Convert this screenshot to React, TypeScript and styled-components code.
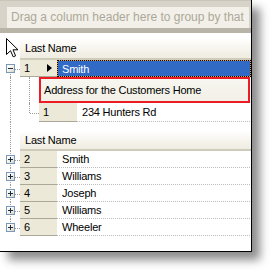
import React from 'react'
import styled, { createGlobalStyle } from 'styled-components'

const GlobalStyle = createGlobalStyle`
    html, body {
        margin: 0;
        padding: 0;
        background: #ffffff;
    }
    body {
        font-family: "Liberation Sans", Arial, sans-serif;
        width: 272px;
        height: 272px;
        overflow: hidden;
    }
`;

const rows = ['Smith', 'Williams', 'Joseph', 'Williams', 'Wheeler']

type LineKind = 'none' | 'full' | 'down' | 'up'

const App = () => {
    return (
        <>
            <GlobalStyle />
            <Frame>
                <GroupArea>
                    <GroupBox>Drag a column header here to group by that</GroupBox>
                </GroupArea>

                <Spacer $h={5} />

                <Line>
                    <Gutter $line='none' />
                    <HeaderCell $h={22}>Last Name</HeaderCell>
                </Line>

                <Line $h={17}>
                    <Gutter $line='down' $branch>
                        <Expander $open />
                    </Gutter>
                    <Selector $w={37}>
                        1
                        <RowArrow />
                    </Selector>
                    <DataCell $selected>Smith</DataCell>
                </Line>

                <Line $h={26}>
                    <Gutter $line='full' />
                    <Gutter $line='full' $w={19} $x={9} />
                    <BandHeader>Address for the Customers Home</BandHeader>
                </Line>

                <Line $h={19}>
                    <Gutter $line='full' />
                    <Gutter $line='up' $w={19} $x={9} $branch />
                    <Selector $w={38}>1</Selector>
                    <DataCell>234 Hunters Rd</DataCell>
                </Line>

                <Line $h={9}>
                    <Gutter $line='full' />
                </Line>

                <Line>
                    <Gutter $line='full' />
                    <HeaderCell $h={20}>Last Name</HeaderCell>
                </Line>

                {rows.map((name, i) => (
                    <Line $h={17} key={i}>
                        <Gutter $line={i === rows.length - 1 ? 'up' : 'full'} $branch>
                            <Expander />
                        </Gutter>
                        <Selector $w={37}>{i + 2}</Selector>
                        <DataCell>{name}</DataCell>
                    </Line>
                ))}

                <Cursor width='13' height='20' viewBox='0 0 13 20'>
                    <path
                        d='M0.5 0.5 L0.5 16.5 L4.5 12.7 L7.2 18.8 L9.6 17.8 L7 11.8 L12 11.8 Z'
                        fill='#ffffff'
                        stroke='#000000'
                        strokeWidth='1'
                        strokeLinejoin='miter'
                    />
                </Cursor>
            </Frame>
        </>
    )
}

const Frame = styled.div`
    position: relative;
    width: 251px;
    height: 251px;
    background: #ffffff;
    border-right: 1px solid #000000;
    border-bottom: 1px solid #000000;
    box-shadow: 8px 8px 9px rgba(0, 0, 0, 0.45);
    overflow: hidden;
    display: flex;
    flex-direction: column;
    font-size: 11px;
    letter-spacing: -0.2px;
    color: #000000;
`;

const GroupArea = styled.div`
    box-sizing: border-box;
    height: 33px;
    flex: none;
    padding: 6px 2px 0 7px;
    background: #d7d3c9;
    border-top: 1px solid #c9c5b9;
    border-bottom: 5px solid #b8b4a7;
`;

const GroupBox = styled.div`
    height: 21px;
    background: #f2f0e8;
    color: #aca899;
    font-size: 12px;
    letter-spacing: 0;
    line-height: 21px;
    padding-left: 4px;
    white-space: nowrap;
    overflow: hidden;
`;

const Spacer = styled.div<{ $h: number }>`
    height: ${p => p.$h}px;
    flex: none;
`;

const Line = styled.div<{ $h?: number }>`
    display: flex;
    flex: none;
    ${p => p.$h ? `height: ${p.$h}px;` : ''}
`;

const Gutter = styled.div<{ $line: LineKind; $w?: number; $x?: number; $branch?: boolean }>`
    position: relative;
    flex: none;
    width: ${p => p.$w ?? 20}px;
    box-sizing: border-box;
    display: flex;
    align-items: center;
    padding-left: 6px;

    &::before {
        content: '';
        display: ${p => p.$line === 'none' ? 'none' : 'block'};
        position: absolute;
        left: ${p => p.$x ?? 10}px;
        top: ${p => p.$line === 'down' ? '50%' : '0'};
        bottom: ${p => p.$line === 'up' ? '50%' : '0'};
        border-left: 1px dotted #9a9a9a;
    }

    &::after {
        content: '';
        display: ${p => p.$branch ? 'block' : 'none'};
        position: absolute;
        left: ${p => (p.$x ?? 10) + 1}px;
        right: 0;
        top: 50%;
        border-top: 1px dotted #9a9a9a;
    }
`;

const Expander = styled.div<{ $open?: boolean }>`
    position: relative;
    z-index: 1;
    box-sizing: border-box;
    width: 9px;
    height: 9px;
    border: 1px solid #7a99b8;
    background: linear-gradient(135deg, #ffffff 0%, #f0efe6 60%, #d6d3c4 100%);

    &::before {
        content: '';
        position: absolute;
        left: 1px;
        top: 3px;
        width: 5px;
        height: 1px;
        background: #1e2a3a;
    }

    &::after {
        content: '';
        display: ${p => p.$open ? 'none' : 'block'};
        position: absolute;
        left: 3px;
        top: 1px;
        width: 1px;
        height: 5px;
        background: #1e2a3a;
    }
`;

const HeaderCell = styled.div<{ $h: number }>`
    flex: 1;
    box-sizing: border-box;
    height: ${p => p.$h}px;
    padding-left: 5px;
    display: flex;
    align-items: center;
    background: linear-gradient(to bottom, #ffffff 0%, #f6f4ec 55%, #efece1 100%);
    border-bottom: 2px solid #cfcbbb;
    white-space: nowrap;
`;

const Selector = styled.div<{ $w: number }>`
    position: relative;
    flex: none;
    box-sizing: border-box;
    width: ${p => p.$w}px;
    background: #ece9d8;
    border-bottom: 1px solid #aca899;
    padding-left: 4px;
    display: flex;
    align-items: center;
`;

const RowArrow = styled.span`
    position: absolute;
    left: 27px;
    top: 4px;
    width: 0;
    height: 0;
    border-top: 4px solid transparent;
    border-bottom: 4px solid transparent;
    border-left: 5px solid #000000;
`;

const DataCell = styled.div<{ $selected?: boolean }>`
    flex: 1;
    box-sizing: border-box;
    padding-left: 5px;
    display: flex;
    align-items: center;
    white-space: nowrap;
    color: ${p => p.$selected ? '#ffffff' : '#000000'};
    ${p => p.$selected
        ? `
        border: 1px dotted #000000;
        padding-left: 4px;
        background: linear-gradient(#316ac5, #316ac5) padding-box, linear-gradient(#e9a640, #e9a640) border-box;
        `
        : `
        border-bottom: 1px dotted #bdbdbd;
        margin-right: 1px;
        `}
`;

const BandHeader = styled.div`
    flex: 1;
    box-sizing: border-box;
    border: 2px solid #ec1c24;
    margin-right: 1px;
    background: linear-gradient(to bottom, #f7f6f0 0%, #f2f0e6 100%);
    padding-left: 3px;
    display: flex;
    align-items: center;
    white-space: nowrap;
`;

const Cursor = styled.svg`
    position: absolute;
    left: 6px;
    top: 38px;
`;

export default App
